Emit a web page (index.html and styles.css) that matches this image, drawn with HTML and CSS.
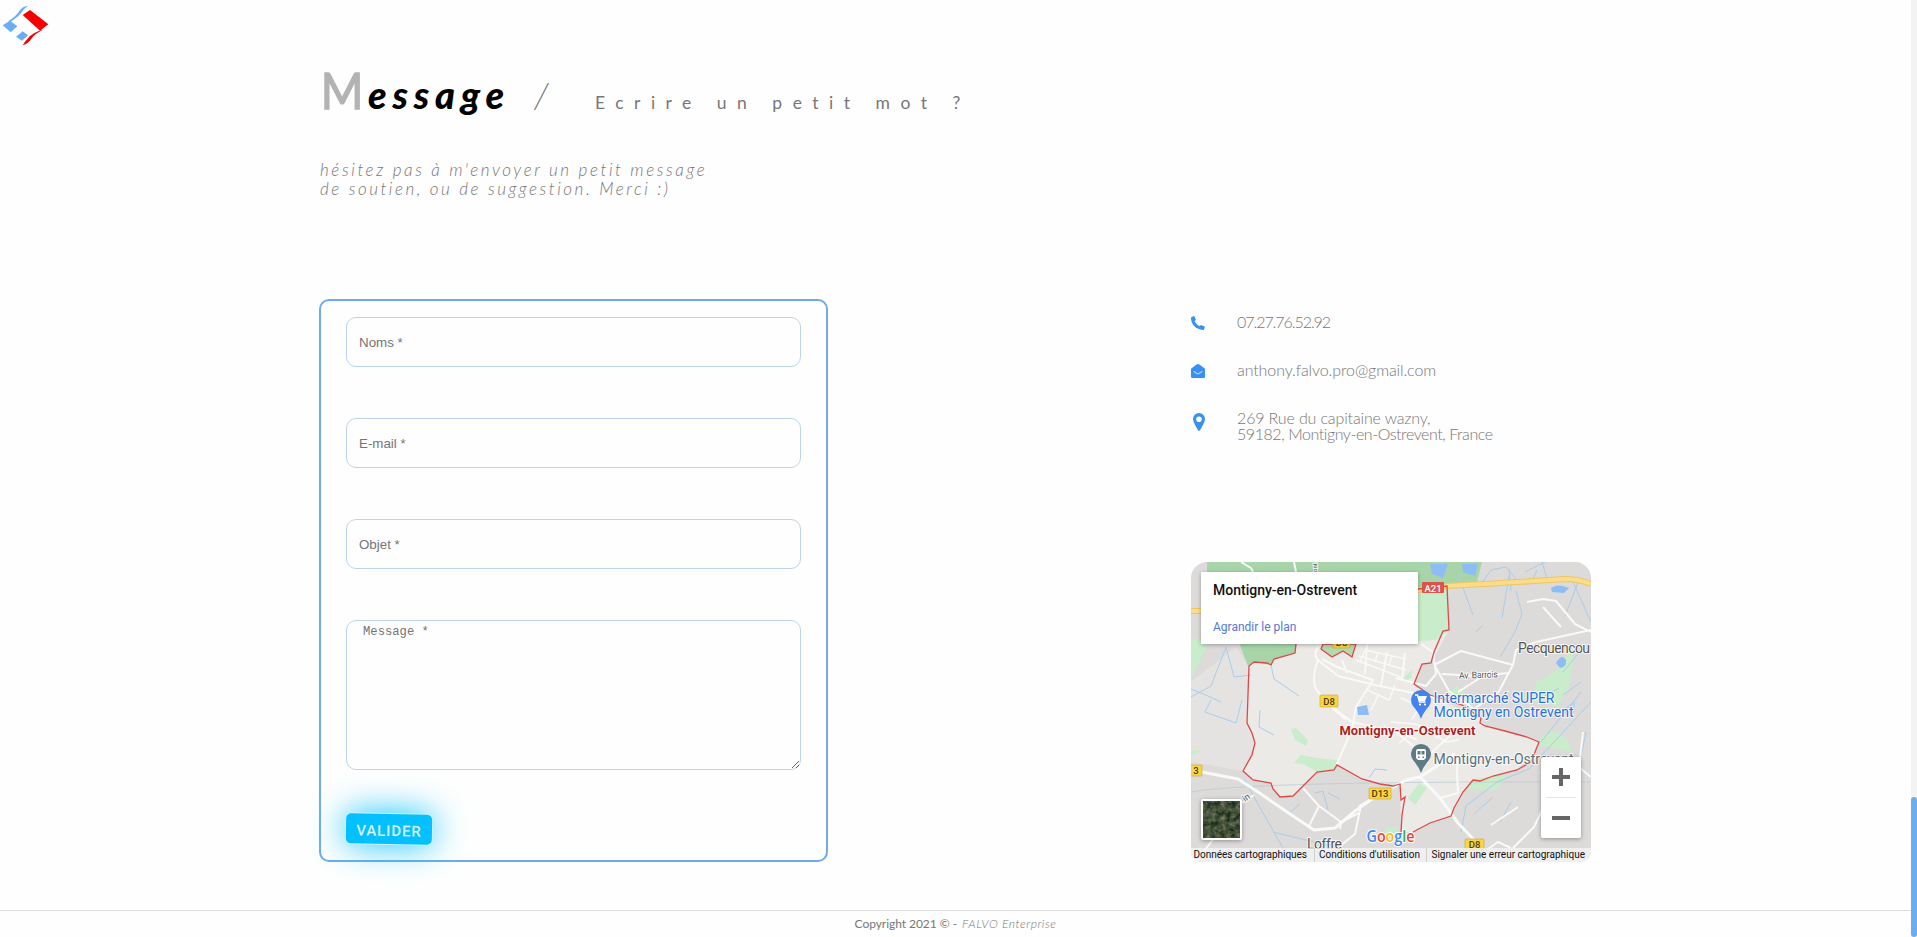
FILE: index.html
```html
<!DOCTYPE html>
<html lang="fr">
<head>
<meta charset="utf-8">
<title>Message</title>
<link rel="stylesheet" href="styles.css">
</head>
<body>
<div class="page">
  <svg class="logo" width="52" height="48" viewBox="0 0 156 144">
    <path fill="#6caef5" d="M30 62 52 79 32 97 8 76Z M68 94 84 106 66 122 48 110Z M24 64Q50 48 60 30Q70 18 84 17Q74 24 66 36Q54 52 30 66Z"/>
    <path fill="#f80000" d="M90 30 145 73 120 92 68 45Z M124 89Q102 98 90 108Q76 122 68 136Q86 130 94 116Q104 102 126 91Z"/>
  </svg>
  <main class="content">
    <h1 class="title"><span class="cap">M</span><span class="word">essage</span><span class="slash">/</span><span class="sub">Ecrire un petit mot ?</span></h1>
    <p class="intro"><span class="intro-a">hésitez pas à m'envoyer un petit message</span><br><span class="intro-b">de soutien, ou de suggestion. Merci :)</span></p>
    <div class="columns">
      <form class="form">
        <input class="field" type="text" placeholder="Noms *">
        <input class="field" type="text" placeholder="E-mail *">
        <input class="field" type="text" placeholder="Objet *">
        <textarea class="area" placeholder="Message *"></textarea>
        <button class="submit" type="button">VALIDER</button>
      </form>
      <aside class="side">
        <ul class="contacts">
          <li class="contact">
            <svg class="icon" width="14" height="14" viewBox="0 0 14 14"><path fill="#3890f2" d="M.4 1.2 2.8.1Q3.4 0 3.6.5L4.8 3.4Q5 3.9 4.5 4.3L3.5 5.3Q5 8.5 8.500 10.200L9.600 9.300Q10 8.900 10.500 9.200L13.400 10.500Q13.900 10.800 13.800 11.300L13 13.500Q12.800 14 12.200 14Q6.800 13.800 3.200 10.100Q0 6.600 0 1.900Q0 1.400.4 1.200Z"/></svg>
            <span class="phone">07.27.76.52.92</span>
          </li>
          <li class="contact">
            <svg class="icon" width="14" height="14" viewBox="0 0 14 14"><path fill="#3890f2" d="M0 5.400Q0 4.700.6 4.300L5.600.5Q7-.4 8.400.5L13.400 4.300Q14 4.700 14 5.400V12.700Q14 14 12.700 14H1.300Q0 14 0 12.700Z"/><path fill="none" stroke="#a8d3ff" stroke-width="1.100" d="M2.700 7.300 5.500 9.300Q7 10.200 8.500 9.300L11.300 7.300"/></svg>
            <span class="mail">anthony.falvo.pro@gmail.com</span>
          </li>
          <li class="contact contact-address">
            <svg class="icon pin" width="14" height="18" viewBox="0 0 14 18"><path fill="#3890f2" fill-rule="evenodd" d="M8 0A6 6 0 0 1 14 6Q14 9 9 17.300Q8 18.700 7 17.300Q2 9 2 6A6 6 0 0 1 8 0ZM8 3.400A2.800 2.800 0 1 0 8 9A2.800 2.800 0 1 0 8 3.400Z"/></svg>
            <span class="address"><span class="addr-a">269 Rue du capitaine wazny,</span><br><span class="addr-b">59182, Montigny-en-Ostrevent, France</span></span>
          </li>
        </ul>
        <div class="map">
          <svg width="400" height="300" viewBox="0 0 400 300">
            <defs>
              <filter id="ground" x="0" y="0" width="100%" height="100%" color-interpolation-filters="sRGB">
                <feTurbulence type="fractalNoise" baseFrequency=".2" numOctaves="4" seed="4"/>
                <feColorMatrix values=".6 .1 0 0 -.09  .5 .12 0 0 0  .4 .1 0 0 -.03  0 0 0 0 1"/>
              </filter>
            </defs>
            <rect width="400" height="300" fill="#dcdbd9"/>
            <path fill="#e4e3e1" d="M0 120 45 85 57 104 56 161 64 181 52 209 0 200Z"/>
            <path fill="#ebeae7" d="M105 82 104 91 83 97 80 103 76 101 63 100 58 104 56 161 61 171 64 181 61 193 52 209 62 218 80 221 82 227 89 235 102 234 112 224 126 210 143 208 146 203 171 217 189 222 209 222 210 270 222 270 239 261 260 254 272 230 282 218 302 214 326 208 344 190 348 180 314 169 294 164 289 156 239 133 223 122 231 102 240 101 258 68 256 24 227 27 227 60Z"/>
            <path fill="#a7d5a9" d="M16 0H291L286 20 227 27H16ZM44 70 105 82 104 91 83 97 80 103 63 100 57 104Z"/>
            <path fill="#c9ecca" d="M227 27 256 24 258 68 245 78 227 79ZM0 76 18 80 0 117ZM100 167 105 166 117 178 115 184 104 178ZM103 201 110 193 125 196 146 198 143 208 126 210 112 202ZM217 236 228 221 236 226 224 243ZM276 228 283 217 316 213 306 228ZM346 182Q352 171 361 170Q375 170 381 190L360 186ZM345 120 364 110 383 83 378 126 366 146 355 138 341 139ZM212 116 221 108 220 116 211 120ZM258 130 266 124 278 135 270 144ZM0 189 12 187 0 195ZM195 265 207 265 205 275 194 273Z"/>
            <path fill="#8ebcf5" d="M239 2H257L252 16 241 12ZM271 2H287L284 14 272 10ZM360 26Q366 21 378 26L373 31 361 30ZM365 101Q371 91 375 98Q376 105 369 106ZM166 145 176 143 178 153 167 153Z"/>
            <path fill="#b5d5f2" d="M369 149 384 139 384 150 372 153Z"/>
            <g fill="none" stroke="#a9cde9" stroke-width="1">
              <path d="M35 85 20 124 0 135M35 85 43 115 60 113M80 103 83 117 108 134M0 127 17 134 30 140M20 138 14 150 45 161 51 138M63 235 100 300M82 270 140 284M54 218 63 235M290 22 300 8 315 5M315 5 325 17M334 10 354 0M340 22 346 8M357 20 351 0M267 12 282 53M318 14 311 56M292 63 285 70M325 29 331 52 324 70 309 95M350 136 368 126M372 133 390 120M387 92 372 110M283 252 302 235M270 270 275 244 306 220 338 207M338 207 400 140M350 180 390 130M395 170 388 205M309 260 320 240M124 231 132 229 137 248M137 231 149 237M97 252 109 242M178 216 184 207 196 208M69 148 68 165 83 173M374 54 388 18M382 20 400 60M320 29 318 7"/>
              <path stroke-width=".7" stroke="#b9c9d3" d="M0 230Q60 219 400 220"/>
            </g>
            <g fill="none" stroke="#f9f9f8" stroke-width="2" stroke-linejoin="round">
              <path d="M50 0 60 6 62 10M103 0 105 10M127 85Q122 93 127 98L147 114 184 123 270 141M127 98Q119 119 127 130L140 144 161 160 205 170 236 195 267 166M131 97 146 105 182 118 165 145 161 167 146 202M230 82 242 90 245 112 235 124 205 116M243 103 270 89 322 103 307 131M322 103 325 88 345 80 400 68M336 40 352 37 365 39 384 62 400 70M352 45 370 65M244 104 258 129 283 147M251 112 287 114 318 111M267 130 300 109M283 147 307 130"/>
              <path stroke-width="3" d="M11 210 47 217 70 232 96 250 123 268 144 266 164 249 190 231M142 146 155 157M215 218 229 215 249 236 267 261 285 280 303 300M215 218 201 226M229 215 264 192"/>
              <path d="M112 226 128 244 118 264M128 244 150 260 149 267M150 260 168 251M170 243 164 272 149 284M63 233 45 245 20 280 5 300M249 236 267 231 266 211M267 196 266 211M297 287 307 280 320 286M322 286 343 265 360 230 350 210M168 244 180 237M300 263 327 245M392 170 388 205 400 215M151 98 156 111M176 82 174 112M196 90 190 124M214 91 211 119"/>
              <path stroke-width="1.500" d="M165 98 212 116M168 94 215 108M169 100 174 88 215 97M184 100 187 90M198 103 201 94M176 128 198 138 204 123M188 132 180 148M210 136 229 145 221 157M200 160 224 162 237 167 246 176 252 165M208 181 217 174 226 178M193 163 197 174M247 174 254 180 268 178"/>
            </g>
            <g fill="none">
              <path stroke="#edc668" stroke-width="6" d="M0 49H10M227 28 256 24Q330 20 374 17Q388 17 400 22"/>
              <path stroke="#fbdc88" stroke-width="4" d="M0 49H10M227 28 256 24Q330 20 374 17Q388 17 400 22"/>
            </g>
            <path fill="none" stroke="#dc4a48" stroke-width="1.300" d="M105 82 104 91 83 97 80 103 76 101 63 100 58 104 56 161 61 171 64 181 61 193 52 209 62 218 80 221 82 227 89 235 102 234 112 224 126 210 143 208 146 203 171 217 189 222 202 224 209 222 210 238 214 235 211 253 210 270M222 270 239 261 260 254 263 246 272 230 282 218 289 219 302 214 326 208 340 200 344 190 348 180 336 175 314 169 294 164 289 161 290 156 271 143 239 133 223 122 231 102 240 101 243 90 252 69 258 68 256 24 227 27"/>
            <path fill="#b5d8ad" stroke="#dc4a48" stroke-width="1.300" d="M132 82 130 87 141 95 152 89 161 95 165 82Z"/>
            <g class="road-label">
              <g fill="#fcd53d" stroke="#c8a72f" stroke-width=".6">
                <rect x="142" y="74" width="17" height="12" rx="1"/><rect x="129" y="133" width="18" height="12" rx="1"/><rect x="178" y="226" width="22" height="11" rx="1"/><rect x="274" y="277" width="19" height="11" rx="1"/><rect x="-1" y="203" width="12" height="11" rx="1"/>
              </g>
              <text x="150.500" y="84">D8</text><text x="138" y="143">D8</text><text x="189" y="235">D13</text><text x="283.500" y="286">D8</text><text x="5" y="212">3</text>
              <rect x="231" y="20" width="22" height="11" rx="1" fill="#d9534f"/><text x="242" y="29.500" fill="#fff">A21</text>
            </g>
            <g class="place">
              <text x="327" y="91" textLength="72">Pecquencou</text>
              <text x="116" y="286.500" textLength="35">Loffre</text>
              <text class="street" x="268" y="116" textLength="39" transform="rotate(-2 288 116)">Av. Barrois</text>
              <text class="street ont" transform="rotate(-90 126 10)" x="126" y="10">ont</text>
              <text class="street" transform="translate(54 240) rotate(-35)">in</text>
              <text x="242.500" y="141" textLength="121" fill="#2b70d8">Intermarché SUPER</text>
              <text x="242.500" y="155" textLength="140" fill="#2b70d8">Montigny en Ostrevent</text>
              <text x="242.500" y="202" textLength="140" fill="#56707b">Montigny-en-Ostrevent</text>
              <text class="town" x="148.500" y="172.500" textLength="136">Montigny-en-Ostrevent</text>
            </g>
            <path fill="#4584ee" d="M230 157Q228 151 222 144A10 10 0 1 1 238 144Q232 151 230 157Z"/>
            <path fill="none" stroke="#fff" stroke-width="1.500" d="M224 133H226.500L228.500 140H234.500"/><path fill="#fff" d="M227 134H236L234 139H228.500Z"/><circle cx="229" cy="142.500" r="1.100" fill="#fff"/><circle cx="234" cy="142.500" r="1.100" fill="#fff"/>
            <path fill="#5e7a84" d="M230 211Q228 205 222 198A10 10 0 1 1 238 198Q232 205 230 211Z"/>
            <path fill="#fff" fill-rule="evenodd" d="M227 187H233Q235 187 235 189V196L233 198H227L225 196V189Q225 187 227 187ZM226.500 189V192.500H229.500V189ZM230.500 189V192.500H233.500V189ZM227 194.500V196H228.500V194.500ZM231.500 194.500V196H233V194.500Z"/>
            <text class="brand" x="175.500" y="279.500" textLength="48" lengthAdjust="spacingAndGlyphs"><tspan fill="#4285f4">G</tspan><tspan fill="#ea4335">o</tspan><tspan fill="#fbbc05">o</tspan><tspan fill="#4285f4">g</tspan><tspan fill="#34a853">l</tspan><tspan fill="#ea4335">e</tspan></text>
            <rect class="raised" x="10" y="237" width="41" height="41" rx="2" fill="#fff"/>
            <rect x="12" y="239" width="37" height="37" filter="url(#ground)"/>
            <rect class="raised" x="350" y="195" width="40" height="81" rx="2" fill="#fff"/>
            <path fill="#666" d="M361 213H368V206H372V213H379V217H372V224H368V217H361ZM361 254H379V258H361Z"/>
            <path stroke="#e6e6e6" d="M355 235.500H385"/>
            <rect y="286" width="400" height="14" fill="#f5f5f5" fill-opacity=".78"/>
            <path stroke="#d0d0d0" d="M123.500 286V300M235.500 286V300"/>
            <g class="legal">
              <text x="2.500" y="296" textLength="113.500">Données cartographiques</text>
              <text x="128" y="296" textLength="101">Conditions d'utilisation</text>
              <text x="240.500" y="296" textLength="153.500">Signaler une erreur cartographique</text>
            </g>
          </svg>
          <div class="card">
            <div class="card-title">Montigny-en-Ostrevent</div>
            <a class="card-link">Agrandir le plan</a>
          </div>
        </div>
      </aside>
    </div>
  </main>
  <footer class="footer"><span class="copy">Copyright 2021 © -</span><em class="owner">FALVO Enterprise</em></footer>
</div>
<div class="track"><div class="thumb"></div></div>
</body>
</html>
```
FILE: styles.css
```css
* { box-sizing: border-box; }
body {
  margin: 0;
  height: 937px;
  display: grid;
  grid-template-columns: 1fr 6px;
  overflow: hidden;
  background: #fefefe;
  font-family: Lato, "Open Sans", sans-serif;
  color: #777;
}
.page { display: flex; flex-direction: column; height: 937px; }
.logo { display: block; flex: none; }
.content { width: 1272px; margin-left: 319px; flex: 1; }
.title {
  display: flex;
  align-items: baseline;
  height: 64px;
  margin: 10px 0 0;
  line-height: 64px;
  white-space: nowrap;
}
.cap { width: 49px; padding-left: 2px; font-size: 51px; font-weight: 400; color: #b3b3b3; -webkit-text-stroke: 1.500px #b3b3b3; transform: scaleX(.9); transform-origin: 0 0; }
.word { width: 166px; font-size: 38px; font-weight: 900; font-style: italic; letter-spacing: 5.800px; color: #000; }
.slash { width: 61px; font-size: 36px; font-weight: 300; font-style: italic; }
.sub { font-size: 17.500px; font-weight: 400; letter-spacing: 10.500px; }
.intro { margin: 38px 0 0; padding-left: 1px; font-size: 17px; line-height: 19px; font-weight: 300; font-style: italic; white-space: nowrap; }
.intro-a { letter-spacing: 2.600px; }
.intro-b { letter-spacing: 2.550px; }
.columns { display: flex; justify-content: space-between; margin-top: 101px; }
.form {
  display: flex;
  flex-direction: column;
  align-items: flex-start;
  width: 509px;
  height: 563px;
  padding: 16px 25px;
  border: 2px solid #6fabec;
  border-radius: 10px;
}
.field, .area {
  width: 455px;
  border: 1px solid #bcd4ee;
  border-radius: 10px;
  background: transparent;
  outline: none;
}
.field { height: 50px; margin-bottom: 51px; padding: 0 12px; font: 13.330px "Liberation Sans", sans-serif; }
.area { height: 150px; padding: 4px 16px; font: 12.200px/15px "Liberation Mono", monospace; }
.submit {
  width: 86px;
  height: 30px;
  margin-top: 44px;
  padding: 3px 0 0;
  border: 0;
  border-radius: 5px;
  background: #04c0fe;
  box-shadow: 0 0 0 1px #c9f3ff, 0 0 35px #04c0fe;
  color: #d4f4ff;
  font: 500 15px Roboto, sans-serif;
  letter-spacing: .9px;
  transform: rotate(1deg);
}
.side { width: 400px; }
.contacts { height: 263px; margin: 0; padding: 13px 0 0; list-style: none; font-size: 16px; line-height: 16px; font-weight: 300; white-space: nowrap; }
.contact { display: flex; gap: 32px; height: 48px; }
.icon { flex: none; margin-top: 4px; }
.pin { margin-top: 5px; }
.phone, .mail, .address { padding-top: 2px; }
.phone { letter-spacing: -1.050px; }
.mail { letter-spacing: -.1px; }
.addr-a { letter-spacing: -.14px; }
.addr-b { letter-spacing: -.440px; }
.map { position: relative; height: 300px; overflow: hidden; border-radius: 16px 16px 10px 10px; font-family: Roboto, sans-serif; }
.map svg { display: block; }
.card {
  position: absolute;
  left: 10px;
  top: 10px;
  width: 217px;
  height: 72px;
  padding: 10px 12px;
  background: #fff;
  box-shadow: 0 1px 4px rgba(0, 0, 0, .3);
}
.card-title { font-size: 14px; line-height: 17px; font-weight: 500; color: #111; }
.card-link { display: block; margin-top: 20px; font-size: 12px; line-height: 16px; color: #5679d4; }
.road-label text { font: 500 9.500px Roboto, sans-serif; text-anchor: middle; }
.road-label text:not([fill]) { fill: #473d1c; }
.place { font: 14px Roboto, sans-serif; fill: #555; stroke: #fff; stroke-width: 2px; stroke-opacity: .75; paint-order: stroke; }
.street { font-size: 9px; }
.ont { font-size: 6px; }
.town { font-size: 13px; font-weight: 700; fill: #b31d1d; }
.brand { font: 600 17px "Open Sans", sans-serif; stroke: #fff; stroke-width: 2px; paint-order: stroke; }
.raised { filter: drop-shadow(0 1px 2px rgba(0, 0, 0, .35)); }
.legal { font: 10px Roboto, sans-serif; fill: #111; }
.footer {
  display: flex;
  justify-content: center;
  gap: 5px;
  height: 27px;
  padding-top: 5px;
  border-top: 1px solid #dedede;
  font-size: 12px;
  line-height: 16px;
}
.copy { font-weight: 400; letter-spacing: -.050px; }
.owner { font-weight: 300; letter-spacing: .550px; }
.track { display: flex; align-items: flex-end; background: #f3f3f3; }
.thumb { width: 6px; height: 140px; border-radius: 3px; background: #6aaef1; }
```
